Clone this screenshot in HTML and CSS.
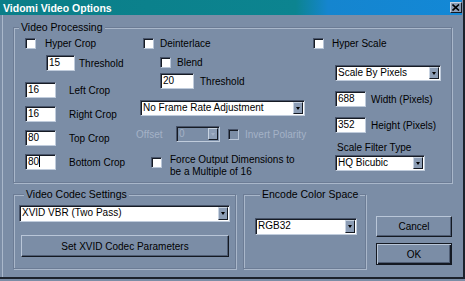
FILE: index.html
```html
<!DOCTYPE html>
<html lang="en">
<head>
    <meta charset="UTF-8">
    <meta name="viewport" content="width=device-width, initial-scale=1.0">
    <title>Vidomi Video Options</title>
    <link rel="stylesheet" href="styles.css">
</head>
<body>
    <div class="window">
        <div class="titlebar">
            <span class="title">Vidomi Video Options</span>
            <span class="close">
                <svg width="8" height="7" viewBox="0 0 8 7"><path d="M0.5 0.5 L7 6.5 M7 0.5 L0.5 6.5" stroke="#000" stroke-width="1.6"/></svg>
            </span>
        </div>

        <div class="client">
            <!-- upper group -->
            <fieldset class="group group-processing">
                <legend>Video Processing</legend>
                <div class="columns">
                    <div class="col col-crop">
                        <div class="row row-check">
                            <span class="check"></span>
                            <span class="label gap-9">Hyper Crop</span>
                        </div>
                        <div class="row row-threshold">
                            <span class="field w-29">15</span>
                            <span class="label gap-4">Threshold</span>
                        </div>
                        <div class="row row-crop first">
                            <span class="field w-31">16</span>
                            <span class="label gap-13">Left Crop</span>
                        </div>
                        <div class="row row-crop">
                            <span class="field w-31">16</span>
                            <span class="label gap-13">Right Crop</span>
                        </div>
                        <div class="row row-crop">
                            <span class="field w-31">80</span>
                            <span class="label gap-13">Top Crop</span>
                        </div>
                        <div class="row row-crop">
                            <span class="field w-31">80<span class="caret"></span></span>
                            <span class="label gap-13">Bottom Crop</span>
                        </div>
                    </div>

                    <div class="col col-frame">
                        <div class="row row-check indent-7">
                            <span class="check"></span>
                            <span class="label gap-6">Deinterlace</span>
                        </div>
                        <div class="row row-check row-blend indent-24">
                            <span class="check"></span>
                            <span class="label gap-6">Blend</span>
                        </div>
                        <div class="row row-blend-threshold indent-24">
                            <span class="field w-34">20</span>
                            <span class="label gap-6">Threshold</span>
                        </div>
                        <div class="row row-framerate indent-4">
                            <div class="combo w-165">
                                <span class="combo-value">No Frame Rate Adjustment</span>
                                <span class="combo-btn"></span>
                            </div>
                        </div>
                        <div class="row row-offset">
                            <span class="label is-disabled offset-label">Offset</span>
                            <div class="combo w-44 is-disabled">
                                <span class="combo-value">0</span>
                                <span class="combo-btn"></span>
                            </div>
                            <span class="check is-disabled gap-8"></span>
                            <span class="label is-disabled gap-6">Invert Polarity</span>
                        </div>
                        <div class="row row-force indent-15">
                            <span class="check"></span>
                            <span class="label gap-8 multiline">Force Output Dimensions to<br>be a Multiple of 16</span>
                        </div>
                    </div>

                    <div class="col col-scale">
                        <div class="row row-check">
                            <span class="check"></span>
                            <span class="label gap-8">Hyper Scale</span>
                        </div>
                        <div class="row row-scale-mode indent-22">
                            <div class="combo w-106">
                                <span class="combo-value">Scale By Pixels</span>
                                <span class="combo-btn"></span>
                            </div>
                        </div>
                        <div class="row row-size indent-22">
                            <span class="field w-31">688</span>
                            <span class="label gap-5">Width (Pixels)</span>
                        </div>
                        <div class="row row-size indent-22">
                            <span class="field w-31">352</span>
                            <span class="label gap-5">Height (Pixels)</span>
                        </div>
                        <div class="row row-filter-label indent-24">
                            <span class="label">Scale Filter Type</span>
                        </div>
                        <div class="row row-filter indent-22">
                            <div class="combo w-90">
                                <span class="combo-value">HQ Bicubic</span>
                                <span class="combo-btn"></span>
                            </div>
                        </div>
                    </div>
                </div>
            </fieldset>

            <!-- lower groups -->
            <div class="lower">
                <fieldset class="group group-codec">
                    <legend>Video Codec Settings</legend>
                    <div class="combo combo-tall w-211">
                        <span class="combo-value">XVID VBR (Two Pass)</span>
                        <span class="combo-btn"></span>
                    </div>
                    <div class="btn btn-codec">Set XVID Codec Parameters</div>
                </fieldset>

                <fieldset class="group group-color">
                    <legend>Encode Color Space</legend>
                    <div class="combo combo-tall w-102">
                        <span class="combo-value">RGB32</span>
                        <span class="combo-btn"></span>
                    </div>
                </fieldset>

                <div class="actions">
                    <div class="btn btn-cancel">Cancel</div>
                    <div class="btn btn-ok">OK</div>
                </div>
            </div>
        </div>
    </div>
</body>
</html>
```

FILE: styles.css
```css
* {
    box-sizing: border-box;
}

body {
    margin: 0;
    background-color: #7b8da6;
    font-family: "Liberation Sans", Arial, sans-serif;
    font-size: 10px;
    color: #000;
}

.window {
    width: 465px;
    height: 279px;
    display: flex;
    flex-direction: column;
    border-right: 2px solid #1c222c;
    border-bottom: 2px solid #1c222c;
}

/* title bar */
.titlebar {
    height: 15px;
    margin-right: 1px;
    padding-left: 3px;
    display: flex;
    align-items: center;
    justify-content: space-between;
    background: linear-gradient(90deg, #0a7e88 0%, #0c8490 64%, #1585cf 71%, #1388d6 100%);
    color: #fff;
    font-weight: bold;
    font-size: 10.5px;
}

.close {
    width: 12px;
    height: 11px;
    display: flex;
    align-items: center;
    justify-content: center;
    background-color: #8c9db5;
    border: 1px solid;
    border-color: #c8d3e1 #141922 #141922 #c8d3e1;
}

.client {
    flex: 1;
    margin-left: 2px;
    border-left: 1px solid #aab8cb;
    padding: 6px 0 0 10px;
}

/* group boxes */
.group {
    margin: 0;
    padding: 0;
    min-width: 0;
    border: 1px solid #6c7c95;
    box-shadow: inset 1px 1px 0 #a9b7ca, 1px 1px 0 #a9b7ca;
}

.group legend {
    margin-left: 5px;
    padding: 0 2px;
    line-height: 12px;
    font-size: 10.5px;
    background-color: #7b8da6;
}

.group-processing {
    width: 439px;
    height: 162px;
}

.columns {
    display: flex;
    padding: 4px 0 0 11px;
}

.col-crop {
    width: 111px;
}

.col-frame {
    width: 177px;
}

.row {
    display: flex;
    align-items: center;
    white-space: nowrap;
}

.row-check {
    height: 13px;
}

.label {
    line-height: 13px;
}

.label.is-disabled {
    color: #a4b2c6;
}

/* spacing helpers */
.gap-4 { margin-left: 4px; }
.gap-5 { margin-left: 5px; }
.gap-6 { margin-left: 6px; }
.gap-8 { margin-left: 8px; }
.gap-9 { margin-left: 9px; }
.gap-13 { margin-left: 13px; }

.indent-4 { padding-left: 4px; }
.indent-7 { padding-left: 7px; }
.indent-15 { padding-left: 15px; }
.indent-22 { padding-left: 22px; }
.indent-24 { padding-left: 24px; }

.w-29 { width: 29px; }
.w-31 { width: 31px; }
.w-34 { width: 34px; }
.w-44 { width: 44px; }
.w-90 { width: 90px; }
.w-102 { width: 102px; }
.w-106 { width: 106px; }
.w-165 { width: 165px; }
.w-211 { width: 211px; }

/* crop column */
.row-threshold {
    margin-top: 5px;
    padding-left: 21px;
}

.row-crop {
    margin-top: 8px;
}

.row-crop.first {
    margin-top: 11px;
}

/* frame column */
.row-blend {
    margin-top: 6px;
}

.row-blend-threshold {
    margin-top: 4px;
}

.row-framerate {
    margin-top: 11px;
}

.row-offset {
    margin-top: 10px;
}

.offset-label {
    width: 40px;
}

.row-force {
    margin-top: 12px;
    align-items: flex-start;
}

.row-force .check {
    margin-top: 3px;
}

.multiline {
    line-height: 12px;
}

/* scale column */
.row-scale-mode {
    margin-top: 15px;
}

.row-size {
    margin-top: 10px;
}

.row-filter-label {
    margin-top: 8px;
}

.row-filter {
    margin-top: 1px;
}

/* controls */
.check {
    width: 11px;
    height: 11px;
    flex: none;
    background-color: #fff;
    border: 1px solid;
    border-color: #48546a #b9c6d8 #b9c6d8 #48546a;
    box-shadow: inset 1px 1px 0 #161b24;
}

.check.is-disabled {
    background-color: #7b8da6;
}

.field {
    height: 16px;
    flex: none;
    padding-left: 2px;
    line-height: 14px;
    background-color: #fff;
    border: 1px solid;
    border-color: #48546a #c0ccdc #c0ccdc #48546a;
    box-shadow: inset 1px 1px 0 #161b24;
}

.caret {
    display: inline-block;
    width: 1px;
    height: 11px;
    vertical-align: -2px;
    background-color: #000;
}

.combo {
    height: 16px;
    flex: none;
    display: flex;
    align-items: stretch;
    padding: 1px 1px 1px 2px;
    background-color: #fff;
    border: 1px solid;
    border-color: #48546a #c0ccdc #c0ccdc #48546a;
    box-shadow: inset 1px 1px 0 #161b24;
}

.combo-tall {
    height: 17px;
}

.combo.is-disabled {
    background-color: #7b8da6;
    color: #a4b2c6;
}

.combo-value {
    flex: 1;
    line-height: 12px;
    overflow: hidden;
}

.combo-btn {
    width: 10px;
    display: flex;
    align-items: center;
    justify-content: center;
    background-color: #8c9db5;
    border: 1px solid;
    border-color: #c8d3e1 #141922 #141922 #c8d3e1;
}

.combo-btn::after {
    content: "";
    border-top: 3px solid #000;
    border-left: 2px solid transparent;
    border-right: 2px solid transparent;
}

.combo.is-disabled .combo-btn::after {
    border-top-color: #a4b2c6;
}

.btn {
    display: flex;
    align-items: center;
    justify-content: center;
    background-color: #7b8da6;
    border: 1px solid;
    border-color: #b9c6d8 #141922 #141922 #b9c6d8;
    box-shadow: inset -1px -1px 0 #4f5d74;
}

/* lower area */
.lower {
    display: flex;
    align-items: flex-start;
    margin-top: 5px;
}

.group-codec {
    width: 223px;
    height: 81px;
    padding: 5px 0 0 5px;
}

.btn-codec {
    width: 208px;
    height: 22px;
    margin: 13px 0 0 2px;
}

.group-color {
    width: 123px;
    height: 81px;
    margin-left: 7px;
    padding: 18px 0 0 11px;
}

.actions {
    width: 76px;
    margin-left: 10px;
    padding-top: 28px;
    display: flex;
    flex-direction: column;
    gap: 6px;
}

.btn-cancel {
    height: 21px;
}

.btn-ok {
    height: 22px;
    border-color: #141922;
    box-shadow: inset 1px 1px 0 #b9c6d8, inset -1px -1px 0 #141922, inset -2px -2px 0 #4f5d74;
}
```
